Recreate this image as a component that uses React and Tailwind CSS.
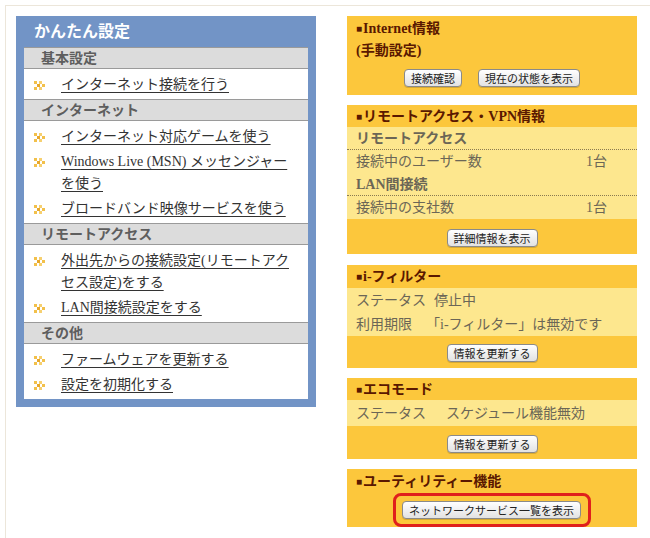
import React from 'react';

const serif = { fontFamily: '"Liberation Serif", "Noto Sans CJK JP", serif' };

const menu = [
  { title: '基本設定', items: [['インターネット接続を行う']] },
  {
    title: 'インターネット',
    items: [
      ['インターネット対応ゲームを使う'],
      ['Windows Live (MSN) メッセンジャー', 'を使う'],
      ['ブロードバンド映像サービスを使う'],
    ],
  },
  {
    title: 'リモートアクセス',
    items: [['外出先からの接続設定(リモートアク', 'セス設定)をする'], ['LAN間接続設定をする']],
  },
  { title: 'その他', items: [['ファームウェアを更新する'], ['設定を初期化する']] },
];

function Bullet() {
  return (
    <svg width="11" height="9" viewBox="0 0 11 9" className="shrink-0 mt-[7px]">
      <rect x="0" y="0" width="3" height="3" fill="#f2c04a" />
      <rect x="3" y="3" width="3" height="3" fill="#e8a82c" />
      <rect x="0" y="6" width="3" height="3" fill="#f2c04a" />
      <rect x="5" y="0" width="3" height="3" fill="#f6d070" />
      <rect x="8" y="3" width="3" height="3" fill="#f2c04a" />
      <rect x="5" y="6" width="3" height="3" fill="#f6d070" />
    </svg>
  );
}

function Btn({ children }) {
  return (
    <button
      className="h-[18px] px-[6px] text-[11px] leading-[16px] text-[#222] border border-[#8a8a8a] rounded-[4px] bg-linear-to-b from-white to-[#e2e2e2] shadow-[0_1px_0_rgba(0,0,0,0.15)]"
      style={{ fontFamily: '"Noto Sans CJK JP", sans-serif' }}
    >
      {children}
    </button>
  );
}

function Head({ children, h = 'h-[22px]' }) {
  return (
    <div className={`${h} flex items-center px-[9px] text-[14px] font-bold text-[#5a1800]`}>
      <span className="text-[10px] mr-[1px]">■</span>
      {children}
    </div>
  );
}

function Row({ children, className = '' }) {
  return (
    <div className={`h-[23px] flex items-center px-[9px] text-[14px] text-[#6b6656] ${className}`}>{children}</div>
  );
}

export default function App() {
  return (
    <div className="w-[650px] h-[538px] bg-white overflow-hidden" style={serif}>
      <div className="ml-[5px] mt-[5px] h-[540px] border-l border-t border-[#ece6da] pl-[10px] pt-[10px] flex items-start gap-[31px]">
        {/* left menu */}
        <div className="w-[300px] bg-[#7294c6] px-[8px] pb-[8px]">
          <div className="h-[31px] flex items-center pl-[10px] text-[16px] font-bold text-white">かんたん設定</div>
          <div className="bg-white">
            {menu.map((sec) => (
              <div key={sec.title}>
                <div className="h-[22px] flex items-center pl-[17px] bg-[#dcdcdc] border-y border-[#9a9a9a] text-[14px] font-bold text-[#5e5e5e]">
                  {sec.title}
                </div>
                <div className="pt-[5px] pb-[3px] flex flex-col gap-[3px]">
                  {sec.items.map((lines) => (
                    <div key={lines[0]} className="flex pl-[10px]">
                      <Bullet />
                      <div className="ml-[16px] text-[14px] leading-[22px] text-[#333] whitespace-nowrap">
                        {lines.map((l) => (
                          <div key={l}>
                            <span className="underline underline-offset-[3px] decoration-[#333]">{l}</span>
                          </div>
                        ))}
                      </div>
                    </div>
                  ))}
                </div>
              </div>
            ))}
          </div>
        </div>

        {/* right panels */}
        <div className="w-[290px] flex flex-col">
          <div className="bg-[#fcc73c] pt-[1px] pb-[8px]">
            <Head>Internet情報</Head>
            <div className="h-[22px] flex items-center px-[9px] text-[14px] font-bold text-[#5a1800]">(手動設定)</div>
            <div className="mt-[8px] flex justify-center gap-[16px]">
              <Btn>接続確認</Btn>
              <Btn>現在の状態を表示</Btn>
            </div>
          </div>

          <div className="mt-[10px] bg-[#fcc73c]">
            <Head>リモートアクセス・VPN情報</Head>
            <div className="bg-[#fde78e]">
              <Row className="font-bold text-[#4a2000] border-b border-dotted border-[#8a7a50]">リモートアクセス</Row>
              <Row className="justify-between pr-[30px]">
                <span>接続中のユーザー数</span>
                <span>1台</span>
              </Row>
              <Row className="font-bold text-[#4a1800] border-b border-dotted border-[#8a7a50]">LAN間接続</Row>
              <Row className="justify-between pr-[30px]">
                <span>接続中の支社数</span>
                <span>1台</span>
              </Row>
            </div>
            <div className="pt-[10px] pb-[7px] flex justify-center">
              <Btn>詳細情報を表示</Btn>
            </div>
          </div>

          <div className="mt-[11px] bg-[#fcc73c]">
            <Head h="h-[23px]">i-フィルター</Head>
            <div className="bg-[#fde78e]">
              <Row className="h-[24px]">
                <span>ステータス</span>
                <span className="ml-[8px]">停止中</span>
              </Row>
              <Row className="h-[24px]">
                <span>利用期限</span>
                <span className="ml-[14px]">「i-フィルター」は無効です</span>
              </Row>
            </div>
            <div className="pt-[8px] pb-[6px] flex justify-center">
              <Btn>情報を更新する</Btn>
            </div>
          </div>

          <div className="mt-[10px] bg-[#fcc73c]">
            <Head>エコモード</Head>
            <div className="bg-[#fde78e]">
              <Row className="h-[26px]">
                <span>ステータス</span>
                <span className="ml-[20px]">スケジュール機能無効</span>
              </Row>
            </div>
            <div className="pt-[9px] pb-[6px] flex justify-center">
              <Btn>情報を更新する</Btn>
            </div>
          </div>

          <div className="mt-[10px] bg-[#fcc73c]">
            <Head h="h-[24px]">ユーティリティー機能</Head>
            <div className="flex justify-center">
              <div className="flex border-[3px] border-[#e0201c] rounded-[8px] pt-[5px] pb-[5px] pl-[6px] pr-[7px]">
                <Btn>ネットワークサービス一覧を表示</Btn>
              </div>
            </div>
          </div>
        </div>
      </div>
    </div>
  );
}
